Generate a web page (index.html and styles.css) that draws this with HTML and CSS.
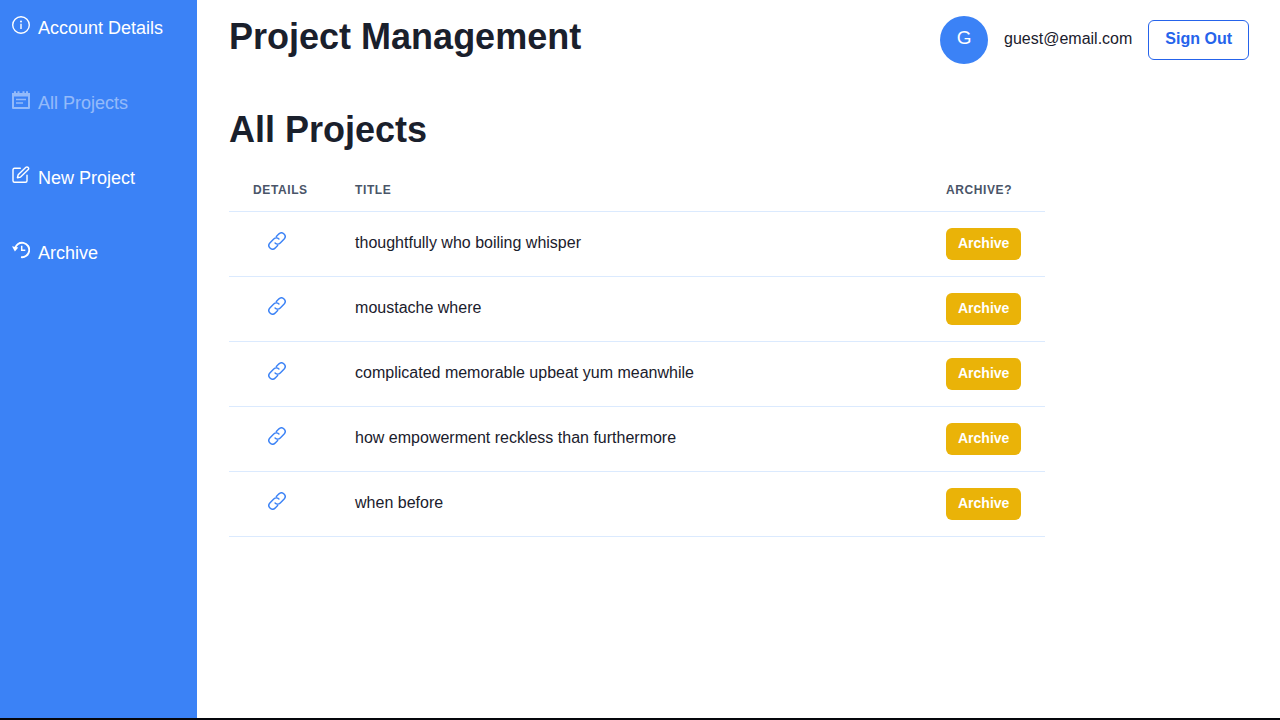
FILE: index.html
```html
<!DOCTYPE html>
<html lang="en">
<head>
<meta charset="utf-8">
<meta name="viewport" content="width=device-width, initial-scale=1">
<title>Project Management</title>
<link rel="stylesheet" href="styles.css">
</head>
<body>
<svg class="symbols" aria-hidden="true">
  <symbol id="chain" viewBox="3.900 3.900 16.200 16.200"><path fill="none" stroke="currentColor" stroke-width="1.300" stroke-linecap="round" d="M13.730 10.270a3.300 3.300 0 0 0-4.660 0L5.570 13.770a3.300 3.300 0 0 0 4.660 4.660L12.600 16.060M10.270 13.730a3.300 3.300 0 0 0 4.660 0L18.430 10.230a3.300 3.300 0 0 0-4.660-4.660L11.400 7.940"/></symbol>
</svg>
<div class="app">
  <nav class="sidebar">
    <a class="nav-item" href="#account">
      <svg class="icon" viewBox="0 0 18 18"><circle cx="9" cy="9" r="8.300" fill="none" stroke="currentColor" stroke-width="1.400"/><circle cx="9" cy="5.500" r="1" fill="currentColor"/><path d="M9 7.700V13" stroke="currentColor" stroke-width="1.400"/></svg>
      <span>Account Details</span>
    </a>
    <a class="nav-item current" href="#projects" aria-current="page">
      <svg class="icon" viewBox="0 0 18 18"><path fill="none" stroke="currentColor" stroke-width="2" stroke-linejoin="round" d="M1 3H17V17H1Z"/><path fill="currentColor" d="M0 2H2V.3H4V2H5.500V.3H7.500V2H10.500V.3H12.500V2H14V.3H16V2H18V5.500H0Z"/><path stroke="currentColor" stroke-width="1.600" d="M4 8.500H14M4 12H11"/></svg>
      <span>All Projects</span>
    </a>
    <a class="nav-item" href="#new">
      <svg class="icon" viewBox="0 0 18 18"><g fill="none" stroke="currentColor" stroke-width="1.400" stroke-linecap="round" stroke-linejoin="round"><path d="M8.300 2.300H2.500Q1 2.300 1 3.800V14.800Q1 16.300 2.500 16.300H13.500Q15 16.300 15 14.800V9.100"/><path d="M5.400 11.700L6.200 8.700L13.900 1.300Q15 .5 16.100 1.400Q17.200 2.500 16.300 3.600L8.600 11.100Z"/></g></svg>
      <span>New Project</span>
    </a>
    <a class="nav-item" href="#archive">
      <svg class="icon" viewBox="0 0 18 18"><path fill="none" stroke="currentColor" stroke-width="1.900" d="M3 7.500A7.200 7.200 0 1 1 9 16.100"/><path fill="currentColor" d="M0 5.200L6.300 6.600L2.900 10.600Z"/><path fill="none" stroke="currentColor" stroke-width="1.500" d="M9.700 4.800V9.300H13.300"/></svg>
      <span>Archive</span>
    </a>
  </nav>
  <div class="content">
    <header class="topbar">
      <h1 class="heading">Project Management</h1>
      <div class="user">
        <span class="avatar">G</span>
        <span class="email">guest@email.com</span>
        <button class="sign-out" type="button">Sign Out</button>
      </div>
    </header>
    <main class="main">
      <h2 class="heading">All Projects</h2>
      <table class="projects">
        <thead>
          <tr><th class="details-col" scope="col">Details</th><th scope="col">Title</th><th class="archive-col" scope="col">Archive?</th></tr>
        </thead>
        <tbody>
          <tr><td class="details"><a href="#p1" aria-label="Details"><svg class="icon"><use href="#chain"/></svg></a></td><td class="title">thoughtfully who boiling whisper</td><td><button class="archive" type="button">Archive</button></td></tr>
          <tr><td class="details"><a href="#p2" aria-label="Details"><svg class="icon"><use href="#chain"/></svg></a></td><td class="title">moustache where</td><td><button class="archive" type="button">Archive</button></td></tr>
          <tr><td class="details"><a href="#p3" aria-label="Details"><svg class="icon"><use href="#chain"/></svg></a></td><td class="title">complicated memorable upbeat yum meanwhile</td><td><button class="archive" type="button">Archive</button></td></tr>
          <tr><td class="details"><a href="#p4" aria-label="Details"><svg class="icon"><use href="#chain"/></svg></a></td><td class="title">how empowerment reckless than furthermore</td><td><button class="archive" type="button">Archive</button></td></tr>
          <tr><td class="details"><a href="#p5" aria-label="Details"><svg class="icon"><use href="#chain"/></svg></a></td><td class="title">when before</td><td><button class="archive" type="button">Archive</button></td></tr>
        </tbody>
      </table>
    </main>
  </div>
</div>
</body>
</html>
```
FILE: styles.css
```css
* { box-sizing: border-box; }
body {
  margin: 0;
  font-family: "Liberation Sans", Arial, sans-serif;
  font-size: 16px;
  line-height: 24px;
  color: #1a202c;
  background: #fff;
}
button { font: inherit; cursor: pointer; }
a { color: inherit; text-decoration: none; }
.symbols { display: none; }
.icon { width: 18px; height: 18px; display: block; flex: none; }
.app {
  display: flex;
  min-height: 100vh;
  border-bottom: 2px solid #05060c;
}
.sidebar {
  display: flex;
  flex-direction: column;
  gap: 48px;
  padding: 14px 34px 14px 12px;
  background: #3b82f6;
  color: #fff;
}
.nav-item {
  display: flex;
  gap: 8px;
  padding-top: 2px;
  font-size: 18px;
  line-height: 25px;
  white-space: nowrap;
}
.nav-item.current { opacity: 0.45; }
.content { flex: 1; min-width: 0; }
.topbar {
  display: flex;
  justify-content: space-between;
  padding: 16px 31px 16px 32px;
}
.heading {
  margin: 0;
  font-size: 36px;
  line-height: 42px;
  font-weight: 700;
}
.user { display: flex; align-items: center; gap: 16px; }
.email { padding-bottom: 2px; }
.avatar {
  display: flex;
  align-items: center;
  justify-content: center;
  width: 48px;
  height: 48px;
  padding-bottom: 4px;
  border-radius: 50%;
  background: #3b82f6;
  color: #fff;
  font-size: 19px;
}
.sign-out {
  height: 40px;
  padding: 0 16px 2px;
  border: 1px solid #2563eb;
  border-radius: 6px;
  background: transparent;
  color: #2563eb;
  font-weight: 700;
}
.main { padding: 29px 31px 28px 32px; }
.projects {
  width: 80%;
  margin-top: 19px;
  table-layout: fixed;
  border-collapse: separate;
  border-spacing: 0;
}
.projects th {
  padding: 12px 24px 13px;
  border-bottom: 1px solid #dbeafe;
  color: #4a5568;
  font-size: 12px;
  line-height: 16px;
  letter-spacing: 0.05em;
  text-align: left;
  text-transform: uppercase;
}
.projects td {
  padding: 16px 24px;
  border-bottom: 1px solid #dbeafe;
  vertical-align: middle;
}
.projects .title { padding-bottom: 18px; }
.projects .details { padding-bottom: 22px; }
.projects .details-col { width: 102px; }
.projects .archive-col { width: 123px; }
.details a {
  display: flex;
  justify-content: center;
  width: 48px;
  color: #3b82f6;
}
.archive {
  display: block;
  height: 32px;
  padding: 0 12px 2px;
  border: 0;
  border-radius: 6px;
  background: #eab308;
  color: #fff;
  font-size: 14px;
  font-weight: 700;
}
```
